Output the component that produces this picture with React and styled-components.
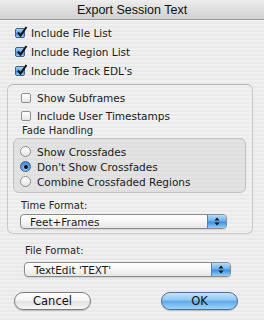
import React from 'react'
import styled, { createGlobalStyle } from 'styled-components'

const GlobalStyle = createGlobalStyle`
  html, body {
    margin: 0;
    padding: 0;
  }
  body {
    font-family: "DejaVu Sans", "Liberation Sans", sans-serif;
    color: #1a1a1a;
  }
`;

const Dialog = styled.div`
  width: 264px;
  height: 320px;
  overflow: hidden;
  box-sizing: border-box;
  background: repeating-linear-gradient(
    to bottom,
    #f0f0f0 0px,
    #f0f0f0 2px,
    #e9e9e9 2px,
    #e9e9e9 4px
  );
  font-size: 10.5px;
`;

const TitleBar = styled.div`
  height: 19px;
  border-bottom: 1px solid #9a9a9a;
  background: linear-gradient(to bottom, #ededed 0%, #dedede 50%, #d2d2d2 100%);
  display: flex;
  align-items: center;
  justify-content: center;
  font-family: "Liberation Sans", "DejaVu Sans", sans-serif;
  font-size: 12.5px;
  color: #111;
`;

const Body = styled.div`
  padding-top: 3px;
`;

const Row = styled.label`
  display: flex;
  align-items: center;
  height: ${p => p.$h || 19}px;
  padding-left: ${p => p.$indent || 0}px;
  gap: 6px;
  white-space: nowrap;
`;

const Box = styled.span`
  width: 10px;
  height: 10px;
  box-sizing: border-box;
  border: 1px solid ${p => (p.$on ? '#3d5f8e' : '#8f8f8f')};
  border-radius: 2px;
  background: ${p =>
    p.$on
      ? 'linear-gradient(to bottom, #a9d3f7 0%, #5aa2e6 50%, #3f8bdc 55%, #8ccaf7 100%)'
      : 'linear-gradient(to bottom, #ffffff 0%, #f2f2f2 60%, #e4e4e4 100%)'};
  position: relative;
  flex: none;
`;

const Tick = styled.svg`
  position: absolute;
  left: 0px;
  top: -3px;
`;

const Radio = styled.span`
  width: 11px;
  height: 11px;
  box-sizing: border-box;
  border-radius: 50%;
  border: 1px solid ${p => (p.$on ? '#3d5f8e' : '#8f8f8f')};
  background: ${p =>
    p.$on
      ? 'radial-gradient(circle at 50% 70%, #9fd2fa 0%, #4f98e2 60%, #3a7fcf 100%)'
      : 'linear-gradient(to bottom, #ffffff 0%, #f0f0f0 60%, #e2e2e2 100%)'};
  display: flex;
  align-items: center;
  justify-content: center;
  flex: none;
  &::after {
    content: '';
    display: ${p => (p.$on ? 'block' : 'none')};
    width: 4px;
    height: 4px;
    border-radius: 50%;
    background: #111;
  }
`;

const Group = styled.div`
  margin: 4px 0 0 7px;
  width: 246px;
  box-sizing: border-box;
  border: 1px solid #c8c8c8;
  border-top-color: #b4b4b4;
  border-radius: 6px;
  background: rgba(255, 255, 255, 0.12);
  padding: 4px 0 4px 0;
`;

const SmallLabel = styled.div`
  font-size: 10px;
  line-height: 12px;
  height: 12px;
  color: #262626;
  padding-left: ${p => p.$indent || 0}px;
  margin-top: ${p => p.$top || 0}px;
`;

const Inset = styled.div`
  margin: 1px 0 0 5px;
  width: 233px;
  box-sizing: border-box;
  border: 1px solid #c0c0c0;
  border-radius: 6px;
  background: rgba(200, 200, 200, 0.32);
  padding: 5px 0 3px 6px;
`;

const Popup = styled.div`
  margin: ${p => p.$top || 0}px 0 0 ${p => p.$left || 0}px;
  width: 207px;
  height: 15px;
  box-sizing: border-box;
  border: 1px solid #8a8a8a;
  border-radius: 4px;
  background: linear-gradient(to bottom, #ffffff 0%, #f6f6f6 50%, #e6e6e6 100%);
  display: flex;
  align-items: center;
  overflow: hidden;
  box-shadow: 0 1px 1px rgba(0, 0, 0, 0.12);
`;

const PopupText = styled.span`
  flex: 1;
  padding-left: 9px;
  font-size: 10.5px;
  white-space: nowrap;
`;

const PopupArrows = styled.span`
  width: 18px;
  height: 100%;
  background: linear-gradient(to bottom, #b6dcfb 0%, #6eb1ec 45%, #3f8ee0 55%, #8fd0fb 100%);
  border-left: 1px solid #5a7fa8;
  display: flex;
  align-items: center;
  justify-content: center;
`;

const ButtonRow = styled.div`
  display: flex;
  justify-content: space-between;
  padding: 0 26px 0 14px;
  margin-top: 15px;
`;

const Button = styled.div`
  width: 77px;
  height: 18px;
  box-sizing: border-box;
  border-radius: 9px;
  border: 1px solid ${p => (p.$primary ? '#4d6f97' : '#7d7d7d')};
  background: ${p =>
    p.$primary
      ? 'linear-gradient(to bottom, #c6e4fb 0%, #8cc6f3 45%, #5fa9ea 52%, #9fd4fa 100%)'
      : 'linear-gradient(to bottom, #ffffff 0%, #f4f4f4 45%, #e2e2e2 55%, #f6f6f6 100%)'};
  display: flex;
  align-items: center;
  justify-content: center;
  font-size: 11.5px;
  color: #111;
  box-shadow: 0 1px 1px rgba(0, 0, 0, 0.2);
`;

function Check({ on, label, indent, h }) {
  return (
    <Row $indent={indent} $h={h}>
      <Box $on={on}>
        {on && (
          <Tick width="12" height="12" viewBox="0 0 12 12">
            <path d="M2 6.5 L4.5 9.5 L10.5 1" fill="none" stroke="#111" strokeWidth="2" />
          </Tick>
        )}
      </Box>
      <span>{label}</span>
    </Row>
  );
}

function RadioRow({ on, label }) {
  return (
    <Row $h={15}>
      <Radio $on={on} />
      <span>{label}</span>
    </Row>
  );
}

function Arrows() {
  return (
    <svg width="6" height="9" viewBox="0 0 6 9">
      <path d="M3 0.5 L5.5 3.5 L0.5 3.5 Z" fill="#111" />
      <path d="M3 8.5 L5.5 5.5 L0.5 5.5 Z" fill="#111" />
    </svg>
  );
}

function Select({ value, left, top }) {
  return (
    <Popup $left={left} $top={top}>
      <PopupText>{value}</PopupText>
      <PopupArrows>
        <Arrows />
      </PopupArrows>
    </Popup>
  );
}

export default function App() {
  return (
    <>
      <GlobalStyle />
      <Dialog>
        <TitleBar>Export Session Text</TitleBar>
        <Body>
          <Check on label="Include File List" indent={15} />
          <Check on label="Include Region List" indent={15} />
          <Check on label="Include Track EDL's" indent={15} />
          <Group>
            <Check label="Show Subframes" indent={13} h={18} />
            <Check label="Include User Timestamps" indent={13} h={18} />
            <SmallLabel $indent={14}>Fade Handling</SmallLabel>
            <Inset>
              <RadioRow label="Show Crossfades" />
              <RadioRow on label="Don't Show Crossfades" />
              <RadioRow label="Combine Crossfaded Regions" />
            </Inset>
            <SmallLabel $indent={13} $top={7}>Time Format:</SmallLabel>
            <Select value="Feet+Frames" left={12} top={2} />
          </Group>
          <SmallLabel $indent={25} $top={11}>File Format:</SmallLabel>
          <Select value="TextEdit 'TEXT'" left={24} top={5} />
          <ButtonRow>
            <Button>Cancel</Button>
            <Button $primary>OK</Button>
          </ButtonRow>
        </Body>
      </Dialog>
    </>
  );
}
